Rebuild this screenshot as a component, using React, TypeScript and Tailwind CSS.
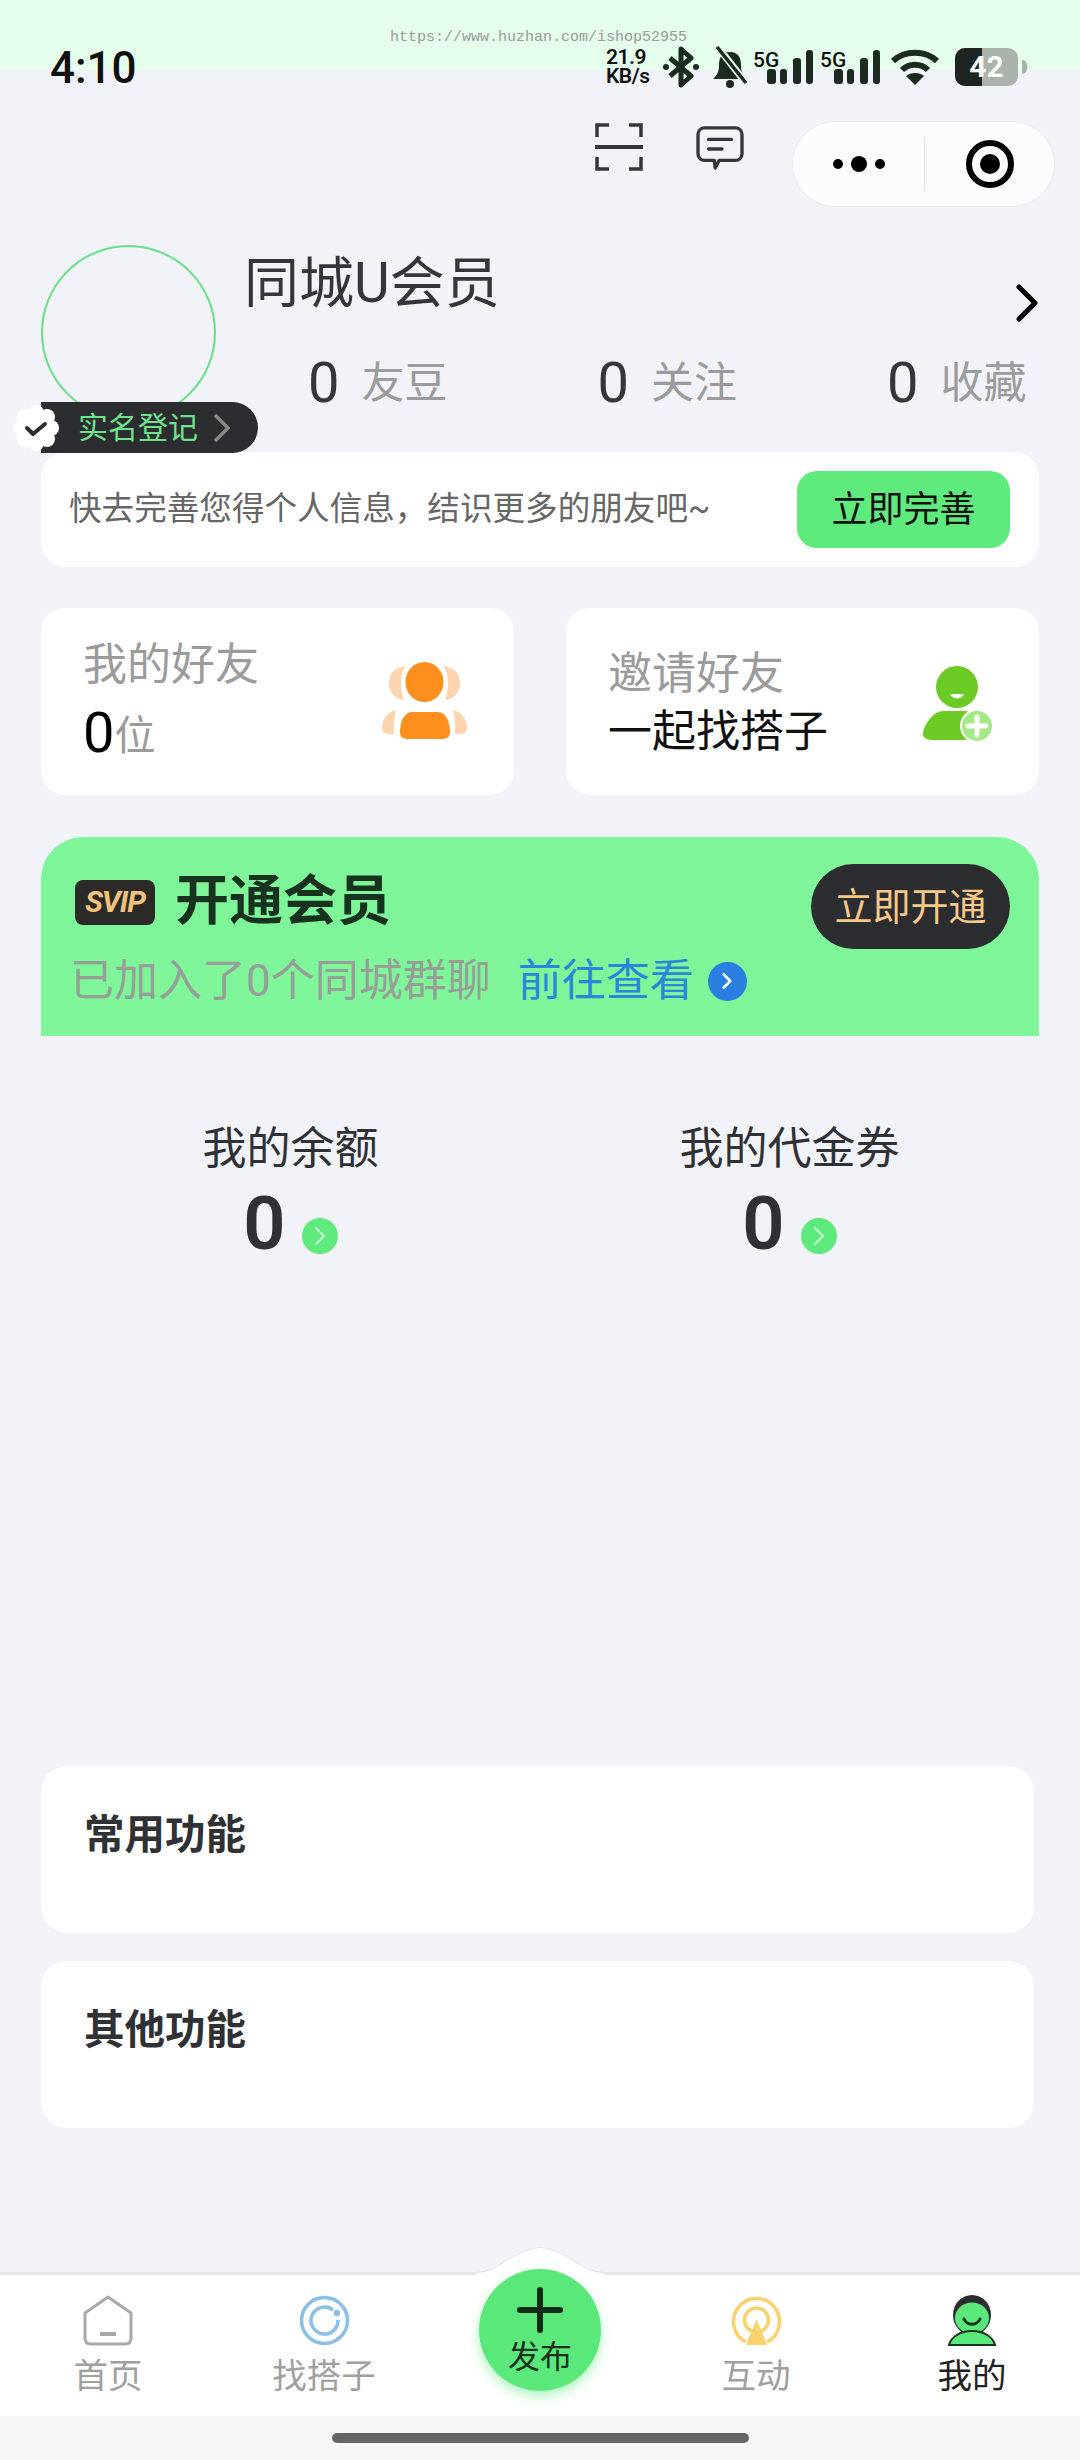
import { ChevronRight } from 'lucide-react'

function Bars() {
  return (
    <div className="flex items-start w-[60px]">
      <span className="text-[21px] font-medium leading-none text-[#111] mt-[1px] w-[26px] shrink-0">5G</span>
      <svg width="46" height="36" viewBox="0 0 46 36" className="-ml-[12px] shrink-0">
        <rect x="0" y="20" width="9" height="15" rx="3" fill="#1c2b20" />
        <rect x="13" y="20" width="7" height="15" rx="3" fill="#1c2b20" />
        <rect x="26" y="9" width="8" height="26" rx="3" fill="#1c2b20" />
        <rect x="39" y="1" width="7" height="34" rx="3" fill="#1c2b20" />
      </svg>
    </div>
  )
}

function StatusBar() {
  return (
    <div className="h-[70px] bg-[#e6ffec] flex items-start justify-between pt-[47px] pl-[50px] pr-[53px]">
      <span className="text-[44px] leading-[42px] font-medium text-[#111]">4:10</span>
      <div className="flex items-center h-[40px]">
        <div className="flex flex-col items-start text-[21px] leading-[19px] font-semibold text-[#111] w-[57px] tracking-[-0.5px]">
          <span>21.9</span>
          <span>KB/s</span>
        </div>
        <svg width="36" height="42" viewBox="0 0 36 42" fill="none" stroke="#1c2b20" strokeWidth="5" strokeLinejoin="round">
          <path d="M7 12 L28 30 L18 39 V3 L28 12 L7 30" />
          <circle cx="3" cy="21" r="3" fill="#1c2b20" stroke="none" />
          <circle cx="33" cy="21" r="3" fill="#1c2b20" stroke="none" />
        </svg>
        <svg width="34" height="42" viewBox="0 0 34 42" className="ml-[14px]">
          <path d="M17 6 C8 6 6 13 6 19 C6 26 4 29 0 33 H34 C30 29 28 26 28 19 C28 13 26 6 17 6 Z" fill="#1c2b20" />
          <circle cx="17" cy="38" r="4" fill="#1c2b20" />
          <path d="M4 0 L33 37" stroke="#e9fbee" strokeWidth="7" />
          <path d="M4 1 L33 37" stroke="#1c2b20" strokeWidth="3.5" />
        </svg>
        <div className="ml-[6px]"><Bars /></div>
        <div className="ml-[7px]"><Bars /></div>
        <svg width="50" height="38" viewBox="0 0 50 38" className="ml-[10px]" fill="none" stroke="#1c2b20" strokeWidth="6">
          <path d="M3 13 C15 2 35 2 47 13" />
          <path d="M12 22 C19 15 31 15 38 22" />
          <path d="M25 37 L16 28 C20 24 30 24 34 28 Z" fill="#1c2b20" stroke="none" />
        </svg>
        <div className="ml-[15px] flex items-center">
          <div className="relative w-[63px] h-[38px] rounded-[10px] bg-[#a9b3aa] overflow-hidden flex items-center justify-center">
            <div className="absolute left-0 top-0 bottom-0 w-[27px] bg-[#1e2420]" />
            <span className="relative text-[30px] leading-none font-bold text-white">42</span>
          </div>
          <div className="w-[5px] h-[14px] rounded-r-full bg-[#a9b3aa] ml-[4px]" />
        </div>
      </div>
    </div>
  )
}

function TopActions() {
  return (
    <div className="flex justify-end items-center pr-[25px] mt-[51px] h-[86px]">
      <svg width="48" height="48" viewBox="0 0 48 48" fill="none" stroke="#33363b" strokeWidth="3.5" className="-mt-[34px]">
        <path d="M2 14 V2 H14 M34 2 H46 V14 M2 34 V46 H14 M34 46 H46 V34" />
        <path d="M0 24 H48" strokeWidth="4" />
      </svg>
      <svg width="50" height="44" viewBox="0 0 50 46" fill="none" stroke="#33363b" strokeWidth="3.5" className="ml-[52px] -mt-[32px]">
        <path d="M9 2 H41 C45 2 48 5 48 9 V29 C48 33 45 36 41 36 H24 L20 44 L19 36 H9 C5 36 2 33 2 29 V9 C2 5 5 2 9 2 Z" strokeLinejoin="round" />
        <path d="M13 14 H37 M13 24 H27" strokeLinecap="round" />
      </svg>
      <div className="ml-[47px] w-[263px] h-[86px] rounded-full bg-[#fbfcfe] border border-[#e9ebf1] flex items-center">
        <div className="w-[131px] flex items-center justify-center gap-[8px]">
          <span className="w-[10px] h-[10px] rounded-full bg-black" />
          <span className="w-[16px] h-[16px] rounded-full bg-black" />
          <span className="w-[10px] h-[10px] rounded-full bg-black" />
        </div>
        <div className="w-px h-[54px] bg-[#dfe1e6]" />
        <div className="flex-1 flex items-center justify-center">
          <div className="w-[48px] h-[48px] rounded-full border-[6px] border-black flex items-center justify-center">
            <div className="w-[20px] h-[20px] rounded-full bg-black" />
          </div>
        </div>
      </div>
    </div>
  )
}

function Stat({ label }: { label: string }) {
  return (
    <div className="flex items-center gap-[22px]">
      <span className="text-[56px] leading-none text-[#33363b]">0</span>
      <span className="text-[43px] leading-none text-[#9b9b9b]">{label}</span>
    </div>
  )
}

function Scallop() {
  return (
    <svg width="48" height="48" viewBox="0 0 48 48" className="relative z-10">
      <g fill="#ffffff">
        <circle cx="24" cy="24" r="17" />
        <circle cx="24" cy="9" r="8" />
        <circle cx="24" cy="39" r="8" />
        <circle cx="9" cy="24" r="8" />
        <circle cx="39" cy="24" r="8" />
        <circle cx="13" cy="13" r="8" />
        <circle cx="35" cy="13" r="8" />
        <circle cx="13" cy="35" r="8" />
        <circle cx="35" cy="35" r="8" />
      </g>
      <path d="M15 24 L21 30 L33 20" fill="none" stroke="#2b2d30" strokeWidth="4" strokeLinecap="round" strokeLinejoin="round" />
    </svg>
  )
}

function Profile() {
  return (
    <div className="relative h-[245px] flex pl-[41px] pr-[42px] pt-[38px]">
      <div className="w-[175px] h-[175px] rounded-full border-2 border-[#66e084] shrink-0" />
      <div className="flex-1 ml-[28px] flex flex-col">
        <div className="flex items-start justify-between mt-[3px]">
          <span className="text-[55px] leading-[70px] text-[#33363b]">同城U会员</span>
          <svg width="22" height="38" viewBox="0 0 22 38" fill="none" stroke="#000" strokeWidth="5" strokeLinecap="round" strokeLinejoin="round" className="mt-[36px]">
            <path d="M3 3 L19 19 L3 35" />
          </svg>
        </div>
        <div className="flex pl-[64px] mt-[33px] gap-[150px]">
          <Stat label="友豆" />
          <Stat label="关注" />
          <Stat label="收藏" />
        </div>
      </div>
      {/* badge sits over the avatar */}
      <div className="absolute left-[12px] top-[195px] flex items-center">
        <Scallop />
        <div className="-ml-[19px] w-[217px] h-[51px] rounded-r-full rounded-l-[14px] bg-[#2b2d30] flex items-center pl-[37px]">
          <span className="text-[30px] leading-none text-[#6fe38a]">实名登记</span>
          <svg width="20" height="30" viewBox="0 0 20 30" fill="none" stroke="#8a8a8a" strokeWidth="3.5" className="ml-[14px]">
            <path d="M3 2 L16 15 L3 28" />
          </svg>
        </div>
      </div>
    </div>
  )
}

function Notice() {
  return (
    <div className="mx-[41px] h-[115px] rounded-[24px] bg-white flex items-center justify-between pl-[28px] pr-[29px]">
      <span className="text-[32.6px] leading-none text-[#666]">快去完善您得个人信息，结识更多的朋友吧~</span>
      <div className="w-[213px] h-[77px] rounded-[20px] bg-[#5fea7d] flex items-center justify-center">
        <span className="text-[36px] leading-none text-[#111]">立即完善</span>
      </div>
    </div>
  )
}

function FriendCards() {
  return (
    <div className="grid grid-cols-2 gap-[52px] mx-[41px] mt-[41px]">
      <div className="h-[187px] rounded-[24px] bg-white flex items-center justify-between pl-[42px] pr-[46px]">
        <div className="flex flex-col -mt-[6px]">
          <span className="text-[44px] leading-[56px] text-[#9b9b9b]">我的好友</span>
          <div className="flex items-end mt-[12px] h-[56px]">
            <span className="text-[56px] leading-[56px] text-black">0</span>
            <span className="text-[41px] leading-[50px] text-[#9b9b9b]">位</span>
          </div>
        </div>
        <svg width="86" height="80" viewBox="0 0 86 80" className="mt-[1px]">
          <g fill="#fcd5ae">
            <path d="M24 4 C12 5 7 12 7 21 C7 30 12 37 22 38 C20 33 19 27 19 20 C19 14 20 9 24 4 Z" />
            <path d="M14 48 C5 50 0 58 0 66 C0 70 3 72 8 72 H12 C11 64 12 56 14 48 Z" />
            <g transform="matrix(-1 0 0 1 85 0)">
              <path d="M24 4 C12 5 7 12 7 21 C7 30 12 37 22 38 C20 33 19 27 19 20 C19 14 20 9 24 4 Z" />
              <path d="M14 48 C5 50 0 58 0 66 C0 70 3 72 8 72 H12 C11 64 12 56 14 48 Z" />
            </g>
          </g>
          <ellipse cx="42.5" cy="20" rx="19" ry="20" fill="#fd8f1f" />
          <path d="M30 50 H56 C64 50 68 60 68 70 C68 75 65 77 60 77 H26 C21 77 18 75 18 70 C18 60 22 50 30 50 Z" fill="#fd8f1f" />
        </svg>
      </div>
      <div className="h-[187px] rounded-[24px] bg-white flex items-center justify-between pl-[42px] pr-[44px]">
        <div className="flex flex-col mt-[2px]">
          <span className="text-[44px] leading-[56px] text-[#9b9b9b]">邀请好友</span>
          <span className="text-[44px] leading-[56px] text-[#111] mt-[2px]">一起找搭子</span>
        </div>
        <svg width="73" height="76" viewBox="0 0 73 76" className="mt-[5px]">
          <ellipse cx="35" cy="21" rx="21" ry="21" fill="#6bcb24" />
          <path d="M28 28 C31 34 39 34 42 28 Z" fill="#ffffff" />
          <path d="M22 45 H46 C40 52 38 66 45 74 H10 C2 74 -1 69 2 63 C6 53 13 45 22 45 Z" fill="#6bcb24" />
          <circle cx="55" cy="60" r="16" fill="#a5e886" stroke="#ffffff" strokeWidth="2" />
          <path d="M55 51 V69 M46 60 H64" stroke="#ffffff" strokeWidth="5" strokeLinecap="round" />
        </svg>
      </div>
    </div>
  )
}

function VipCard() {
  return (
    <div className="mx-[41px] mt-[42px] h-[199px] rounded-t-[42px] bg-[#7ef598] flex justify-between pl-[34px] pr-[29px] pt-[27px]">
      <div className="flex flex-col">
        <div className="flex items-center mt-[9px]">
          <div className="w-[80px] h-[45px] rounded-[8px] bg-[#2b2a28] flex items-center justify-center">
            <span className="text-[30px] leading-none font-bold italic tracking-[-1px] text-[#f3c27b]">SVIP</span>
          </div>
          <span className="ml-[20px] text-[54px] leading-[58px] font-bold text-[#17321f]">开通会员</span>
        </div>
        <div className="flex items-center mt-[25px] -ml-[5px]">
          <span className="text-[44px] leading-[50px] text-[#969e98]">已加入了0个同城群聊</span>
          <span className="ml-[27px] text-[44px] leading-[50px] text-[#2a86d8]">前往查看</span>
          <div className="ml-[14px] w-[39px] h-[39px] rounded-full bg-[#2a7fe0] flex items-center justify-center">
            <ChevronRight size={26} strokeWidth={2.5} className="text-white" />
          </div>
        </div>
      </div>
      <div className="w-[199px] h-[85px] rounded-full bg-[#2b2d30] flex items-center justify-center">
        <span className="text-[38px] leading-none text-[#f8c887]">立即开通</span>
      </div>
    </div>
  )
}

function Amount({ label }: { label: string }) {
  return (
    <div className="flex flex-col items-center">
      <span className="text-[44px] leading-[56px] text-[#2f3135]">{label}</span>
      <div className="flex items-end gap-[16px] mt-[12px]">
        <span className="text-[74px] leading-[70px] font-semibold text-[#2f3135]">0</span>
        <div className="w-[36px] h-[36px] rounded-full bg-[#5fea7d] flex items-center justify-center mb-[5px]">
          <ChevronRight size={32} strokeWidth={1.5} className="text-[#c8f7d3]" />
        </div>
      </div>
    </div>
  )
}

function Section({ title }: { title: string }) {
  return (
    <div className="ml-[41px] w-[993px] h-[167px] rounded-[26px] bg-white pl-[43px] pt-[44px]">
      <span className="block text-[40.5px] leading-[50px] font-bold text-[#2f3135]">{title}</span>
    </div>
  )
}

function TabItem({ label, icon, active }: { label: string; icon: React.ReactNode; active?: boolean }) {
  return (
    <div className="flex flex-col items-center">
      <div className="h-[51px] flex items-center justify-center">{icon}</div>
      <span className={active ? 'mt-[11px] text-[34.5px] leading-[38px] text-[#222]' : 'mt-[11px] text-[34.5px] leading-[38px] text-[#a0a0a0]'}>{label}</span>
    </div>
  )
}

function TabBar() {
  return (
    <div className="mt-auto">
      <div className="relative h-[144px] bg-white border-t-[3px] border-[#e4e4ea]">
        {/* hump and publish button float over the bar */}
        <svg width="200" height="32" viewBox="0 0 200 32" className="absolute left-[440px] -top-[29px]">
          <path d="M0 27 H36 C60 27 72 4 100 2 C128 4 140 27 164 27 H200" fill="none" stroke="#e4e4ea" strokeWidth="2" />
          <path d="M36 32 V27 C60 27 72 4 100 2 C128 4 140 27 164 27 V32 Z" fill="#ffffff" />
        </svg>
        <div className="absolute left-[479px] -top-[6px] w-[122px] h-[122px] rounded-full bg-[#5be87a] shadow-[0_6px_12px_rgba(91,232,122,0.45)] flex flex-col items-center pt-[18px]">
          <svg width="46" height="46" viewBox="0 0 46 46" stroke="#0f2a16" strokeWidth="6" strokeLinecap="round">
            <path d="M23 3 V43 M3 23 H43" />
          </svg>
          <span className="text-[32px] leading-[34px] text-[#17321f] mt-[7px]">发布</span>
        </div>
        <div className="grid grid-cols-5 pt-[20px]">
          <TabItem
            label="首页"
            icon={
              <svg width="50" height="51" viewBox="0 0 50 51" fill="none" stroke="#a8a8a8" strokeWidth="3">
                <path d="M25 2 L48 18 V43 C48 47 46 49 42 49 H8 C4 49 2 47 2 43 V18 Z" strokeLinejoin="round" />
                <path d="M17 39 H33" strokeWidth="4" />
              </svg>
            }
          />
          <TabItem
            label="找搭子"
            icon={
              <svg width="51" height="51" viewBox="0 0 51 51" fill="none" stroke="#8abfe8" strokeWidth="3.5">
                <circle cx="25.5" cy="25.5" r="23" />
                <path d="M34 15 A13.5 13.5 0 1 0 39 25" strokeWidth="3.5" />
                <circle cx="38" cy="18" r="1.5" fill="#8abfe8" />
              </svg>
            }
          />
          <div />
          <TabItem
            label="互动"
            icon={
              <svg width="51" height="51" viewBox="0 0 51 51" fill="none" stroke="#f8d26f" strokeWidth="3.5">
                <path d="M15 47 A23 23 0 1 1 36 47" />
                <circle cx="25.5" cy="25" r="12" />
                <path d="M25.5 24 L36 50 H15 Z" fill="#f8d26f" stroke="none" />
              </svg>
            }
          />
          <TabItem
            label="我的"
            active
            icon={
              <svg width="48" height="51" viewBox="0 0 48 51">
                <ellipse cx="24" cy="20" rx="19" ry="20" fill="#2b2d30" />
                <ellipse cx="24" cy="23" rx="17" ry="15.5" fill="#5be87a" />
                <path d="M16 24 C19 31 29 31 32 24" fill="none" stroke="#17321f" strokeWidth="3" strokeLinecap="round" />
                <path d="M1 50 C3 42 12 36 24 36 C36 36 45 42 47 50 Z" fill="#5be87a" stroke="#17321f" strokeWidth="2" />
              </svg>
            }
          />
        </div>
      </div>
      <div className="h-[44px] bg-[#f7f7f9] flex justify-center pt-[17px]">
        <div className="w-[417px] h-[10px] rounded-full bg-[#666]" />
      </div>
    </div>
  )
}

export default function App() {
  return (
    <div className="relative w-[1080px] h-[2460px] flex flex-col bg-[#f1f3f9] overflow-hidden [font-family:Roboto,'Noto_Sans_CJK_SC',sans-serif]">
      <StatusBar />
      {/* watermark baked into the screenshot */}
      <span className="absolute left-[390px] top-[30px] text-[15px] leading-[15px] text-[#9a9a9a] [font-family:'Liberation_Mono',monospace]">https://www.huzhan.com/ishop52955</span>
      <TopActions />
      <Profile />
      <Notice />
      <FriendCards />
      <VipCard />
      <div className="grid grid-cols-2 mx-[41px] mt-[85px]">
        <Amount label="我的余额" />
        <Amount label="我的代金券" />
      </div>
      <div className="mt-[507px] flex flex-col gap-[28px]">
        <Section title="常用功能" />
        <Section title="其他功能" />
      </div>
      <TabBar />
    </div>
  )
}
